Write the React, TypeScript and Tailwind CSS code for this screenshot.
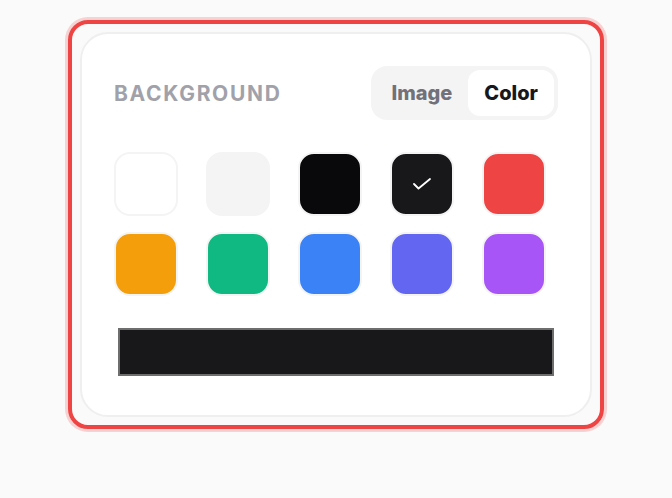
import React from "react";

const swatches = [
  { c: "bg-[#ffffff]" },
  { c: "bg-[#f4f4f5]" },
  { c: "bg-[#09090b]" },
  { c: "bg-[#18181b]", selected: true },
  { c: "bg-[#ef4444]" },
  { c: "bg-[#f59e0b]" },
  { c: "bg-[#10b981]" },
  { c: "bg-[#3b82f6]" },
  { c: "bg-[#6366f1]" },
  { c: "bg-[#a855f7]" },
];

export default function App() {
  return (
    <div
      className="min-h-screen bg-[#fafafa] flex justify-center pt-5"
      style={{ fontFamily: "Inter, 'Noto Sans', sans-serif" }}
    >
      <div className="self-start rounded-[20px] border-4 border-[#ef4444] p-2 shadow-[0_0_0_3px_rgba(239,68,68,0.22)]">
        <div className="w-[512px] rounded-[28px] border-2 border-[#efefef] bg-white px-8 pt-8 pb-[39px]">
          <div className="flex items-center justify-between">
            <span className="text-[21px] font-bold tracking-[0.08em] text-[#a1a1aa] leading-none">
              BACKGROUND
            </span>
            <div className="flex rounded-2xl bg-[#f4f4f5] p-1">
              <button className="h-[46px] px-4 rounded-xl text-[20px] font-extrabold text-[#71717a]">
                Image
              </button>
              <button className="h-[46px] px-4 rounded-xl bg-white text-[20px] font-extrabold text-[#18181b]">
                Color
              </button>
            </div>
          </div>
          <div className="mt-8 grid grid-cols-[repeat(5,64px)] gap-x-7 gap-y-4">
            {swatches.map((s, i) => (
              <div
                key={i}
                className={`size-16 rounded-2xl border-2 border-[#f4f4f5] flex items-center justify-center ${s.c}`}
              >
                {s.selected && (
                  <svg width="18" height="12" viewBox="0 0 18 12" fill="none">
                    <polyline
                      points="1,6 5.5,10.5 17,1"
                      stroke="white"
                      strokeWidth="1.8"
                      strokeLinecap="round"
                      strokeLinejoin="round"
                    />
                  </svg>
                )}
              </div>
            ))}
          </div>
          <div className="mt-8 mx-1 h-12 border-2 border-[#6e6e6e] bg-[#18181b]" />
        </div>
      </div>
    </div>
  );
}
